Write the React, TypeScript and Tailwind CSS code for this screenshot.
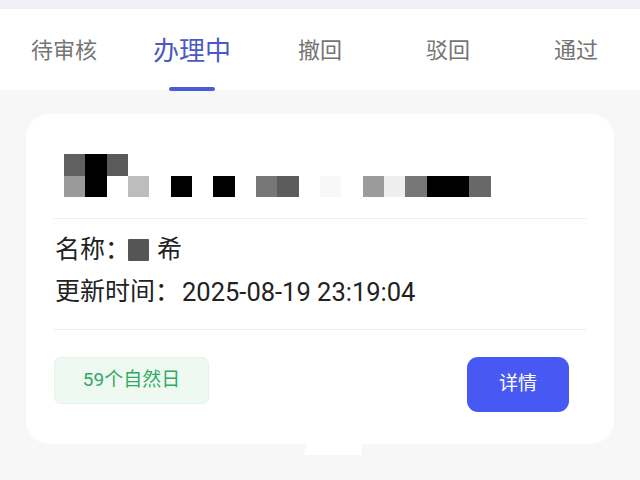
import React from "react";

const tabs = ["待审核", "办理中", "撤回", "驳回", "通过"];

// pixelated mosaic cells (colour or null for blank)
const row1 = ["#606060", "#000000", "#5a5a5a"];
const row2: (string | null)[] = [
  "#9a9a9a", "#000000", null, "#bdbdbd", null, "#000000", null, "#000000", null, "#777777",
  "#5c5c5c", null, "#f8f8f8", null, "#9b9b9b", "#eeeeee", "#777777", "#000000", "#000000", "#686868",
];

function Mosaic() {
  return (
    <div className="ml-[10px] flex flex-col">
      <div className="flex">
        {row1.map((c, i) => (
          <div key={i} className="w-[21.33px] h-[21.5px]" style={{ background: c }} />
        ))}
      </div>
      <div className="flex">
        {row2.map((c, i) => (
          <div key={i} className="w-[21.33px] h-[21.5px]" style={{ background: c ?? "transparent" }} />
        ))}
      </div>
    </div>
  );
}

export default function App() {
  return (
    <div
      className="w-[640px] h-[480px] overflow-hidden bg-[#f7f7f7]"
      style={{ fontFamily: "Roboto, 'Noto Sans CJK SC', sans-serif" }}
    >
      <div className="h-[9px] bg-[#eef0f5]" />

      {/* Tabs */}
      <div className="grid grid-cols-5 h-[81px] bg-white">
        {tabs.map((t, i) => (
          <div key={t} className="relative flex items-center justify-center pt-[3px]">
            {i === 1 ? (
              <>
                <span className="text-[26px] text-[#4b59c2] leading-none">{t}</span>
                <div className="absolute bottom-[-1px] w-[46px] h-[4px] rounded-full bg-[#4a5bd6]" />
              </>
            ) : (
              <span className="text-[22px] text-[#747474] leading-none">{t}</span>
            )}
          </div>
        ))}
      </div>

      {/* Card */}
      <div className="relative mx-[26px] mt-[24px] h-[330px] rounded-[24px] bg-white px-[28px] pt-[40px]">
        <Mosaic />
        <div className="mt-[21px] h-px bg-[#eeeeee]" />

        <div className="mt-[13px] flex items-center h-[36px] text-[25px] text-[#222] pl-px">
          <span>名称：</span>
          <span className="-ml-[2px] inline-block w-[21px] h-[22px] bg-[#555] rounded-[1px]" />
          <span className="ml-[8px]">希</span>
        </div>
        <div className="mt-[6px] flex items-center h-[36px] text-[25px] text-[#222] pl-px">
          <span>更新时间：</span>
          <span className="ml-[2px] text-[25.5px]">2025-08-19 23:19:04</span>
        </div>

        <div className="mt-[19px] h-px bg-[#ececec]" />

        <div className="mt-[27px] flex items-start">
          <div className="flex items-center justify-center w-[155px] h-[47px] rounded-[7px] bg-[#eef9f2] border border-[#e2f3e8] text-[19px] text-[#35a865]">
            59个自然日
          </div>
          <button className="ml-auto mr-[17px] w-[102px] h-[55px] rounded-[11px] bg-[#4859f3] text-white text-[19px]">
            详情
          </button>
        </div>

        <div className="absolute left-[277px] bottom-[-11px] w-[59px] h-[11px] bg-white [clip-path:polygon(8%_0,100%_0,100%_100%,0_100%)]" />
      </div>
    </div>
  );
}
